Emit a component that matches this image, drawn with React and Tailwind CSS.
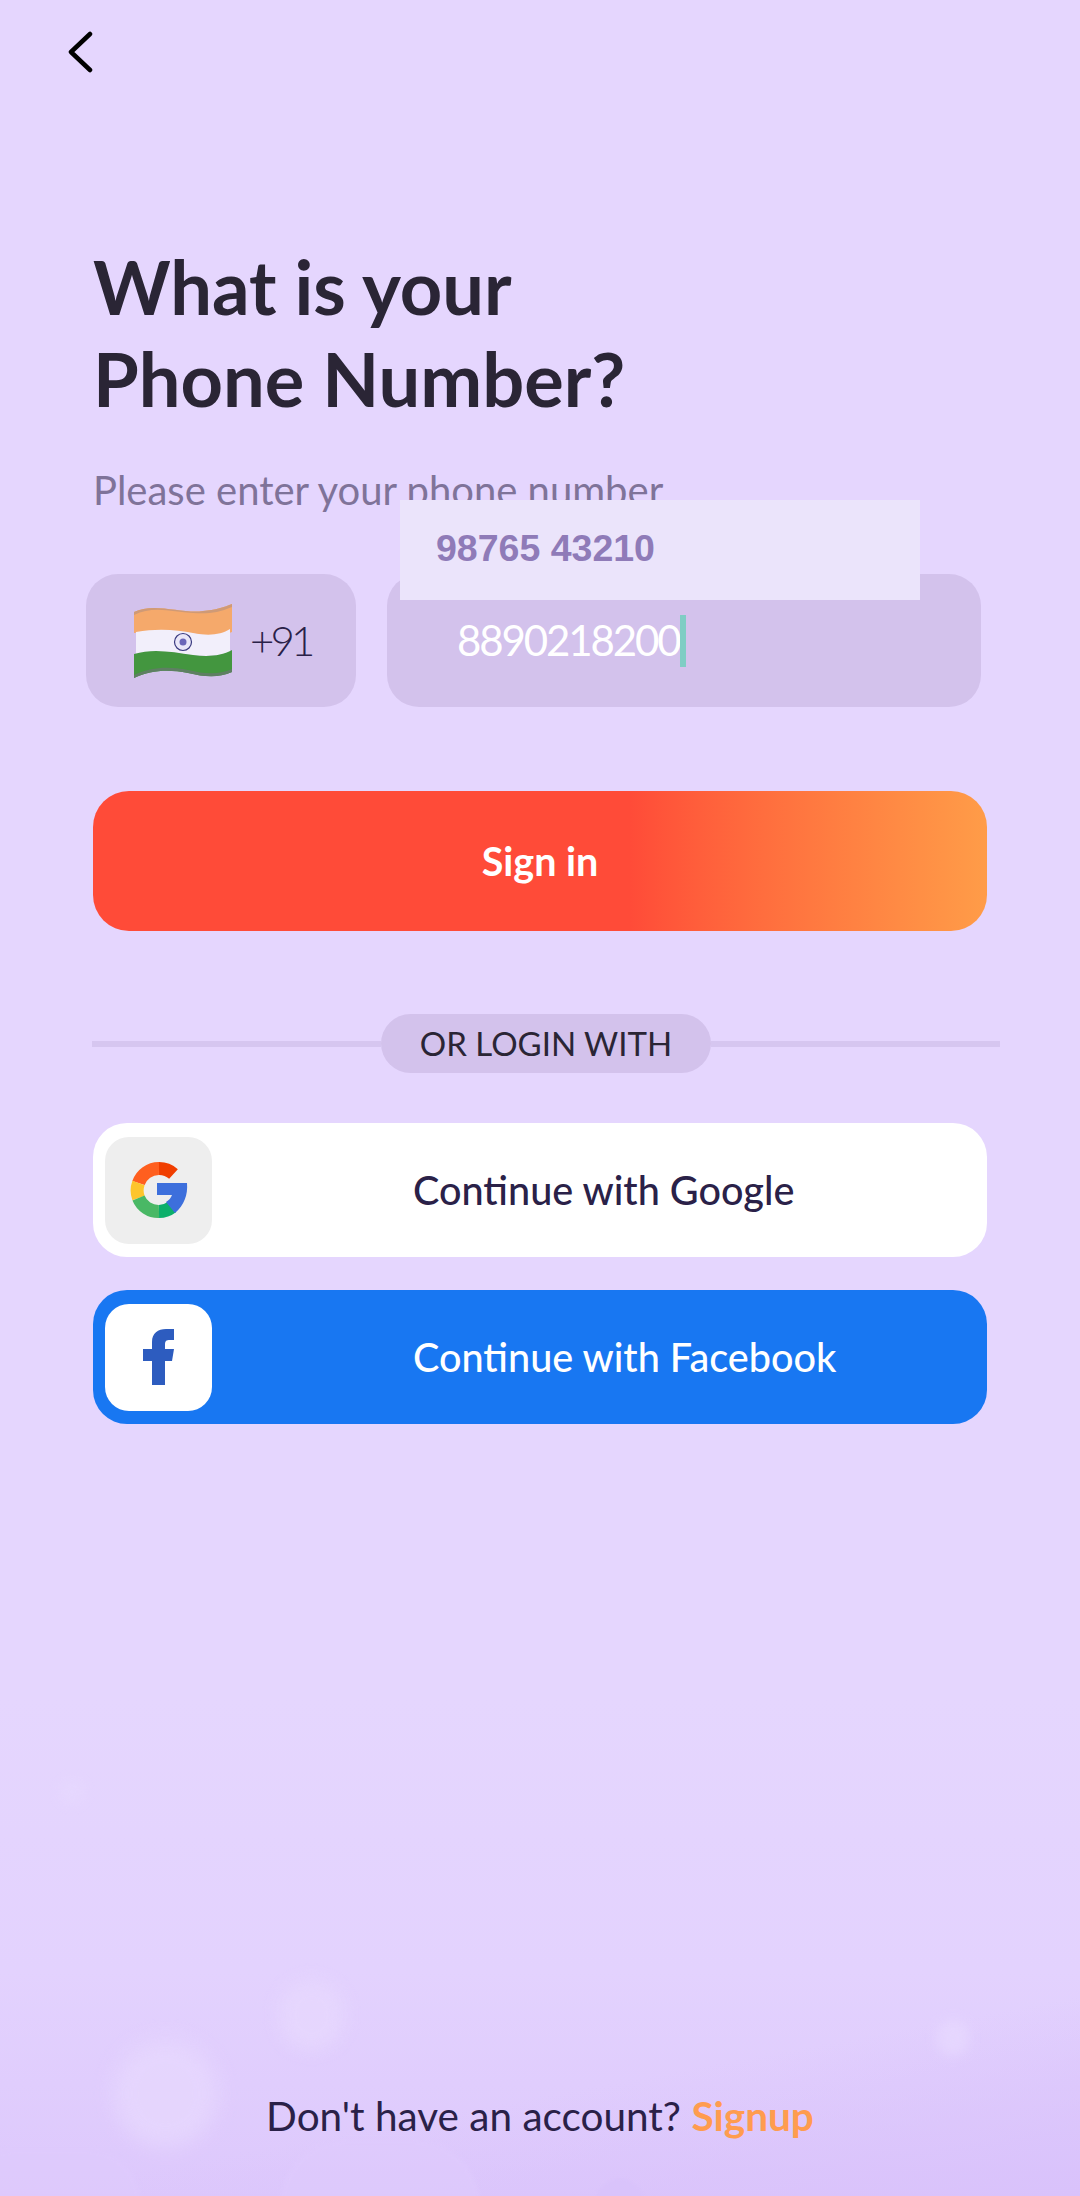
import React from "react";

const sans = "font-['Lato','Noto_Sans',sans-serif]";

// fondo decorativo de la parte inferior
const Bubbles = () => (
  <div className="absolute inset-x-0 bottom-0 h-[496px] overflow-hidden bg-gradient-to-b from-[#e5d6fe] via-[#e3d2fe] via-55% to-[#ddc8fc]">
    <div className="absolute inset-x-0 bottom-0 h-[200px] bg-gradient-to-br from-transparent from-50% to-[#d9c2fb]" />
    <div className="absolute left-[114px] top-[340px] h-[107px] w-[103px] rounded-full bg-[#e7d8fe] opacity-80 blur-[10px]" />
    <div className="absolute left-[279px] top-[280px] h-[70px] w-[65px] rounded-full bg-[#e7d8fe] opacity-80 blur-[8px]" />
    <div className="absolute left-[937px] top-[320px] h-[36px] w-[32px] rounded-full bg-[#e8daff] opacity-70 blur-[6px]" />
    <div className="absolute left-[60px] top-[80px] h-[24px] w-[24px] rounded-full bg-[#e9dcff] opacity-40 blur-[6px]" />
    <div className="absolute left-[280px] top-[440px] h-[130px] w-[200px] rounded-full bg-[#dfcbfd] opacity-60 blur-[2px]" />
    <div className="absolute left-[-40px] top-[450px] h-[100px] w-[180px] rounded-full bg-[#dfcbfd] opacity-50 blur-[2px]" />
    <div className="absolute left-[595px] top-[478px] h-[50px] w-[50px] rounded-full bg-[#d9c3fb] opacity-70 blur-[1px]" />
  </div>
);

const IndiaFlag = () => (
  <svg width="100" height="74" viewBox="0 0 100 74">
    <path d="M1 8 C20 -2 50 10 70 7 C82 6 92 3 99 0 V28 C80 36 60 28 40 27 C25 26 12 28 1 29 Z" fill="#f5a96b" />
    <path d="M1 8 C20 -2 50 10 70 7 C82 6 92 3 99 0 V3 C85 9 75 10 60 9 C40 8 20 1 1 11 Z" fill="#cf9a76" />
    <path d="M3 28 C25 24 45 26 60 29 C75 32 88 31 97 25 V48 C80 54 65 52 50 50 C30 47 15 47 3 50 Z" fill="#f2effb" />
    <path d="M1 50 C20 44 40 48 60 51 C75 53 88 52 99 46 V68 C85 74 72 73 55 69 C35 65 18 66 1 74 Z" fill="#43963f" />
    <path d="M1 71 C18 63 35 62 55 66 C72 70 85 71 99 65 V68 C85 74 72 73 55 69 C35 65 18 66 1 74 Z" fill="#5e7f63" />
    <circle cx="50" cy="38" r="8.5" fill="#e9e6f8" stroke="#39397f" strokeWidth="1.2" />
    <circle cx="50" cy="38" r="3.5" fill="#6a66b8" />
  </svg>
);

const GoogleIcon = () => (
  <svg width="58" height="58" viewBox="0 0 58 58" fill="none" strokeWidth="13">
    <path d="M8.5 22 A21.5 21.5 0 0 1 29 7.5" stroke="#ff5f1f" />
    <path d="M29 7.5 A21.5 21.5 0 0 1 43.5 13" stroke="#f03e00" />
    <path d="M8.5 22 A21.5 21.5 0 0 0 8.5 37" stroke="#fdc52c" />
    <path d="M8.5 37 A21.5 21.5 0 0 0 29 50.5" stroke="#49b865" />
    <path d="M29 50.5 A21.5 21.5 0 0 0 42 46" stroke="#0caf6a" />
    <path d="M27 22 H57 C58 34 54 44 45 52 L36 41 C39 39 41 37 42 34 H27 Z" fill="#3d6fdc" stroke="none" />
  </svg>
);

const FacebookIcon = () => (
  <svg width="31" height="56" viewBox="0 0 31 56">
    <path d="M9 56 V32 H0 V20 H9 V13 C9 4 15 0 23 0 H31 V11 H27 C23 11 22 12 22 16 V20 H31 L29 32 H22 V56 Z" fill="#2d5cbf" />
  </svg>
);

const SocialButton = ({ icon, label, buttonClass, boxClass }) => (
  <button className={`flex h-[134px] w-[894px] items-center rounded-[34px] pl-[12px] ${buttonClass}`}>
    <span className={`flex h-[107px] w-[107px] items-center justify-center rounded-[24px] ${boxClass}`}>
      {icon}
    </span>
    <span className="ml-[201px] text-[39.6px] font-medium leading-none">{label}</span>
  </button>
);

const App = () => {
  return (
    <div className={`relative flex h-[2196px] w-full flex-col overflow-hidden bg-[#e5d6fe] ${sans}`}>
      <Bubbles />

      <div className="relative flex flex-1 flex-col">
        <button className="ml-[67px] mt-[31px] block h-[42px] w-[26px] text-black">
          <svg width="26" height="42" viewBox="0 0 26 42" fill="none" stroke="currentColor" strokeWidth="4.5" strokeLinecap="round" strokeLinejoin="round">
            <path d="M23 3 L4 21 L23 39" />
          </svg>
        </button>

        <h1 className="ml-[93px] mt-[168px] text-[74px] font-bold leading-[92px] text-[#2a2535]">
          What is your
          <br />
          Phone Number?
        </h1>

        <p className="ml-[93px] mt-[40px] text-[40px] leading-[50px] text-[#7f7399]">
          Please enter your phone number
        </p>

        <div className="relative ml-[86px] mt-[59px] flex gap-[31px]">
          <div className="flex h-[133px] w-[270px] items-center rounded-[32px] bg-[#d3c2ec] pl-[47px]">
            <IndiaFlag />
            <span className="ml-[17px] text-[42px] font-light tracking-[-3.8px] text-[#2a2148]">+91</span>
          </div>
          <div className="flex h-[133px] w-[594px] items-center rounded-[32px] bg-[#d3c2ec] pl-[70px]">
            <span className="text-[42px] tracking-[-2.1px] text-white">8890218200</span>
            <span className="h-[52px] w-[6px] bg-[#7fcdc4]" />
          </div>
          {/* sugerencia de autocompletar, queda encima del campo */}
          <div className="absolute left-[314px] top-[-74px] flex h-[100px] w-[520px] items-center bg-[#ebe4fb] pb-[4px] pl-[36px] font-['Liberation_Sans',sans-serif] text-[37.5px] font-bold text-[#8f7bb8]">
            98765 43210
          </div>
        </div>

        <button className="ml-[93px] mt-[84px] h-[140px] w-[894px] rounded-[36px] bg-gradient-to-r from-[#ff4b38] from-60% to-[#ff9c48] text-[39.5px] font-bold text-white">
          Sign in
        </button>

        <div className="ml-[92px] mt-[83px] flex h-[59px] w-[908px] items-center">
          <div className="h-[6px] w-[289px] bg-[#d6c6f0]" />
          <div className="flex h-[59px] w-[330px] items-center justify-center rounded-[30px] bg-[#d3c2ec] text-[33px] leading-none text-[#2a2535]">
            OR LOGIN WITH
          </div>
          <div className="h-[6px] flex-1 bg-[#d6c6f0]" />
        </div>

        <div className="ml-[93px] mt-[50px] flex flex-col gap-[33px]">
          <SocialButton
            icon={<GoogleIcon />}
            label="Continue with Google"
            buttonClass="bg-white text-[#2a2148]"
            boxClass="bg-[#eeeeee]"
          />
          <SocialButton
            icon={<FacebookIcon />}
            label="Continue with Facebook"
            buttonClass="bg-[#1877f2] text-white"
            boxClass="bg-white"
          />
        </div>

        <p className="mb-[55px] mt-auto text-center text-[40.5px] leading-[50px] text-[#2a2148]">
          Don't have an account? <span className="font-bold text-[#ff9c4f]">Signup</span>
        </p>
      </div>
    </div>
  );
};

export default App;
